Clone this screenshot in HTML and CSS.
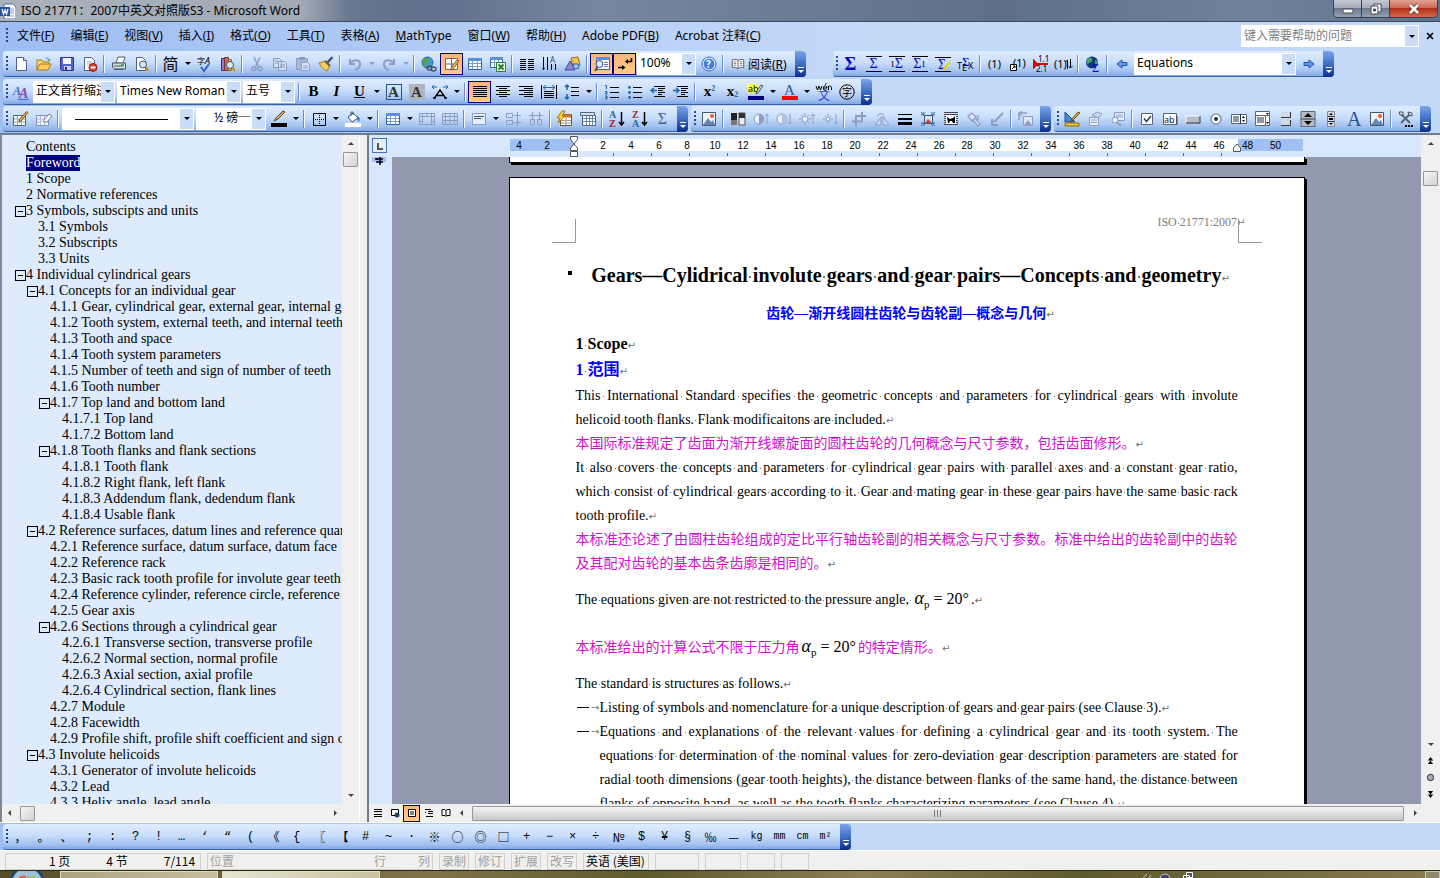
FILE: index.html
```html
<!DOCTYPE html>
<html lang="zh-CN">
<head>
    <meta charset="UTF-8">
    <meta name="viewport" content="width=device-width, initial-scale=1.0">
    <title>ISO 21771：2007中英文对照版S3 - Microsoft Word</title>
    <link rel="stylesheet" href="styles.css">
</head>
<body>
    <header class="titlebar">
        <svg class="app-icon" viewBox="0 0 16 16"><path d="M4 1h9l3 3v12H4z" fill="#fff" stroke="#4a6fb5"/><path d="M10 6h4M10 8h4M10 10h4M7 13h7" stroke="#7f9ccc"/><path d="M0 4h10v9H0z" fill="#2a55a5"/><path d="M2 6l1.500 5L5 7l1.500 4L8 6" fill="none" stroke="#fff" stroke-width="1.300"/></svg>
        <h1>ISO 21771：2007中英文对照版S3 - Microsoft Word</h1>
        <div class="window-buttons">
            <button class="win-min" aria-label="最小化"><svg viewBox="0 0 16 12"><path d="M3 6h10v4H3z" fill="#fff" stroke="#445"/></svg></button>
            <button class="win-max" aria-label="还原"><svg viewBox="0 0 16 12"><path d="M6 1h7v8H6z" fill="#fff" stroke="#445"/><path d="M3 3h7v8H3z" fill="#fff" stroke="#445"/><path d="M5.500 6h2v2h-2z" fill="#667" stroke="#445"/></svg></button>
            <button class="win-close" aria-label="关闭"><svg viewBox="0 0 16 12"><path d="M4 2l8 8M12 2l-8 8" stroke="#533" stroke-width="4"/><path d="M4 2l8 8M12 2l-8 8" stroke="#fff" stroke-width="2.500"/></svg></button>
        </div>
    </header>

    <nav class="menubar">
        <span class="grip"></span>
        <a href="#">文件(<u>F</u>)</a>
        <a href="#">编辑(<u>E</u>)</a>
        <a href="#">视图(<u>V</u>)</a>
        <a href="#">插入(<u>I</u>)</a>
        <a href="#">格式(<u>O</u>)</a>
        <a href="#">工具(<u>T</u>)</a>
        <a href="#">表格(<u>A</u>)</a>
        <a href="#"><u>M</u>athType</a>
        <a href="#">窗口(<u>W</u>)</a>
        <a href="#">帮助(<u>H</u>)</a>
        <a href="#">Adobe PDF(<u>B</u>)</a>
        <a href="#">Acrobat 注释(<u>C</u>)</a>
        <div class="combo help-box">
            <input type="text" aria-label="键入需要帮助的问题" placeholder="键入需要帮助的问题">
            <button class="combo-arrow" aria-label="展开"></button>
        </div>
        <button class="doc-close" aria-label="关闭窗口"><svg viewBox="0 0 8 8"><path d="M1 1l6 6M7 1l-6 6" stroke="#000" stroke-width="1.600"/></svg></button>
    </nav>

    <div class="toolbar-row">
        <div class="toolbar">
            <span class="grip"></span>
            <button class="tb" aria-label="新建"><svg viewBox="0 0 16 16"><path d="M3.500 1.500h7l3 3v10h-10z" fill="#fff" stroke="#4c5f85"/><path d="M10.500 1.500v3h3" fill="#dde6f6" stroke="#4c5f85"/></svg></button>
            <button class="tb" aria-label="打开"><svg viewBox="0 0 16 16"><path d="M1 14V4h5l1 2h6v3" fill="#f7d774" stroke="#a9771b"/><path d="M1 14l3-6h11l-3 6z" fill="#ffcf5a" stroke="#a9771b"/><path d="M9 3c2-2 4-1 4 1M11.500 3.500l1.500 1.500 1.500-2" fill="none" stroke="#4a6"/></svg></button>
            <button class="tb" aria-label="保存"><svg viewBox="0 0 16 16"><path d="M1.500 1.500h13v13h-12l-1-1z" fill="#5a62cf" stroke="#2d3190"/><path d="M4 2h8v6H4z" fill="#f4f6ff"/><path d="M5 10h7v4H5z" fill="#c9cdf3"/><path d="M6 11h2v3H6z" fill="#2d3190"/></svg></button>
            <button class="tb" aria-label="权限"><svg viewBox="0 0 16 16"><path d="M2.500 1.500h7l3 3v10h-10z" fill="#fff" stroke="#4c5f85"/><path d="M5 6h5M5 8h4" stroke="#9ab"/><circle cx="11" cy="11.500" r="4" fill="#d8402a" stroke="#8d1f10"/><path d="M8.500 11.500h5" stroke="#fff" stroke-width="2"/></svg></button>
            <span class="sep"></span>
            <button class="tb" aria-label="打印"><svg viewBox="0 0 16 16"><path d="M5 7l2-6h7l-2 6z" fill="#fff" stroke="#567"/><path d="M1.500 7h13v6h-11l-2-2z" fill="#d4dbe4" stroke="#456"/><path d="M3 13.500h9M3 10h9" stroke="#456"/><path d="M10 9h3" stroke="#3b3" stroke-width="2"/></svg></button>
            <button class="tb" aria-label="打印预览"><svg viewBox="0 0 16 16"><path d="M2.500 1.500h6l3 3v10h-9z" fill="#fff" stroke="#4c5f85"/><circle cx="9" cy="8.500" r="3.500" fill="#cfe6f8" stroke="#456"/><path d="M11.500 11.500l3 3" stroke="#c80" stroke-width="2"/></svg></button>
            <span class="sep"></span>
            <button class="tb glyph-cn" aria-label="简体">简</button>
            <button class="drop" aria-label="更多"></button>
            <button class="tb" aria-label="拼写"><svg viewBox="0 0 16 16"><text x="0" y="8" font-size="8" fill="#000">字</text><text x="8" y="8" font-size="9" fill="#000" font-style="italic">A</text><path d="M4 11l3 4 5-7" fill="none" stroke="#36c" stroke-width="2"/></svg></button>
            <button class="tb" aria-label="信息检索"><svg viewBox="0 0 16 16"><path d="M1.500 2.500h3v12h-3z" fill="#8a7ad0" stroke="#436"/><path d="M4.500 1.500h4v13h-4z" fill="#c46a5a" stroke="#733"/><path d="M8.500 3.500h3v11h-3z" fill="#f0c860" stroke="#863"/><circle cx="10" cy="9" r="3.500" fill="#d8ecfa" stroke="#456"/><path d="M12.500 12l2.500 3" stroke="#c80" stroke-width="2"/></svg></button>
            <span class="sep"></span>
            <button class="tb off" aria-label="剪切"><svg viewBox="0 0 16 16"><path d="M5 1l4 9M11 1L7 10" stroke="#8b9dc3" stroke-width="1.500"/><circle cx="5" cy="12.500" r="2" fill="none" stroke="#8b9dc3" stroke-width="1.500"/><circle cx="11" cy="12.500" r="2" fill="none" stroke="#8b9dc3" stroke-width="1.500"/></svg></button>
            <button class="tb off" aria-label="复制"><svg viewBox="0 0 16 16"><path d="M1.500 2.500h6l2 2v7h-8zM6.500 5.500h6l2 2v7h-8z" fill="#d5e0f5" stroke="#8b9dc3"/><path d="M8 9h5M8 11h5M3 5h3M3 7h3" stroke="#8b9dc3"/></svg></button>
            <button class="tb off" aria-label="粘贴"><svg viewBox="0 0 16 16"><path d="M1.500 2.500h11v11h-11z" fill="#a9b9dc" stroke="#8b9dc3"/><path d="M4 1h6v3H4z" fill="#8b9dc3"/><path d="M6.500 6.500h6l2 2v6h-8z" fill="#dce6f8" stroke="#8b9dc3"/><path d="M8 10h5M8 12h5" stroke="#8b9dc3"/></svg></button>
            <button class="tb" aria-label="格式刷"><svg viewBox="0 0 16 16"><path d="M14.500 1L9 7" stroke="#456" stroke-width="2.500"/><path d="M1 7l7-2 4 4-3 6c-3-1-6-4-8-8z" fill="#f3cf57" stroke="#a07818"/><path d="M7 5l5 5" stroke="#754" stroke-width="2"/></svg></button>
            <span class="sep"></span>
            <button class="tb off" aria-label="撤消"><svg viewBox="0 0 16 16"><path d="M3 3v5h5M3 8c3-5 10-5 10 0 0 3-2 5-5 6" fill="none" stroke="#8b9dc3" stroke-width="2"/></svg></button>
            <button class="drop off" aria-label="撤消列表"></button>
            <button class="tb off" aria-label="恢复"><svg viewBox="0 0 16 16"><path d="M13 3v5H8M13 8C10 3 3 3 3 8c0 3 2 5 5 6" fill="none" stroke="#8b9dc3" stroke-width="2"/></svg></button>
            <button class="drop off" aria-label="恢复列表"></button>
            <span class="sep"></span>
            <button class="tb" aria-label="超链接"><svg viewBox="0 0 16 16"><circle cx="6.500" cy="6.500" r="5.500" fill="#4a9ad8" stroke="#2a5f8e"/><path d="M3 3c3-2 5-1 5 1s-3 2-3 4 1 3-1 3-3-5-1-8z" fill="#49a947"/><path d="M6 12a2.500 2 0 0 1 5 0 2.500 2 0 0 1-5 0zm4 1a2.500 2 0 0 1 5 0 2.500 2 0 0 1-5 0z" fill="none" stroke="#456" stroke-width="1.300"/></svg></button>
            <button class="tb on" aria-label="表格和边框"><svg viewBox="0 0 16 16"><path d="M1.500 2.500h12v11h-12z" fill="#fff" stroke="#667"/><path d="M7.500 3v10M2 8h11" stroke="#667"/><path d="M15 5l-6 8-2 1 0-2 6-8z" fill="#f2c14e" stroke="#85580e"/></svg></button>
            <button class="tb" aria-label="插入表格"><svg viewBox="0 0 16 16"><path d="M1.500 2.500h13v11h-13z" fill="#fff" stroke="#2f5fb3"/><path d="M1 3.500h14" stroke="#5a8fe0" stroke-width="3"/><path d="M2 7.500h12M2 10.500h12M5.500 5v8M10.500 5v8" stroke="#7b9dd6"/></svg></button>
            <button class="tb" aria-label="插入 Excel 表格"><svg viewBox="0 0 16 16"><path d="M.5 1.500h12v10H.5z" fill="#fff" stroke="#2f5fb3"/><path d="M0 2.500h13" stroke="#5a8fe0" stroke-width="3"/><path d="M1 6.500h11M4.500 4v7M8.500 4v7" stroke="#7b9dd6"/><path d="M6.500 6.500h9v9h-9z" fill="#e8f5e4" stroke="#2d8132"/><path d="M8.500 8.500l5 5M13.500 8.500l-5 5" stroke="#2d8132" stroke-width="2"/></svg></button>
            <span class="sep"></span>
            <button class="tb" aria-label="分栏"><svg viewBox="0 0 16 16"><path d="M1 3.500h6M9 3.500h6M1 5.500h6M9 5.500h6M1 7.500h6M9 7.500h6M1 9.500h6M9 9.500h6M1 11.500h6M9 11.500h6M1 13.500h6M9 13.500h6" stroke="#000"/></svg></button>
            <button class="tb" aria-label="文字方向"><svg viewBox="0 0 16 16"><path d="M1.500 1v13M5.500 1v13M9.500 8v6M13.500 8v6" stroke="#000"/><text x="8" y="7" font-size="8" fill="#248">A</text><path d="M0 12h3l-1.500 2z" fill="#000"/></svg></button>
            <button class="tb" aria-label="绘图"><svg viewBox="0 0 16 16"><path d="M6 2l7-1 2 8-7 2z" fill="#f0c254" stroke="#94701f"/><path d="M5 5l5 9H0z" fill="#8f87d8" stroke="#4b4598"/><path d="M8 8h5l1 4-5 1z" fill="#9bc7f0" stroke="#36609c"/></svg></button>
            <span class="sep"></span>
            <button class="tb on" aria-label="文档结构图"><svg viewBox="0 0 16 16"><path d="M2.500 1.500h13v12h-13z" fill="#fff" stroke="#2f5fb3"/><path d="M2 2.500h14" stroke="#5a8fe0" stroke-width="3"/><path d="M10 6.500h4M10 8.500h4M10 10.500h4" stroke="#678"/><circle cx="5.500" cy="8" r="3.500" fill="#d8ecfa" stroke="#456"/><path d="M3.500 11L1 15" stroke="#456" stroke-width="2"/></svg></button>
            <button class="tb on" aria-label="显示编辑标记"><svg viewBox="0 0 16 16"><path d="M14.500 2v3.500H10" fill="none" stroke="#000" stroke-width="1.500"/><path d="M11 3v5L8 5.500z" fill="#000"/><path d="M1 11.500h4" stroke="#000" stroke-width="1.500"/><path d="M5 9v5l3.500-2.500z" fill="#000"/></svg></button>
            <div class="combo zoom-box">
                <select aria-label="显示比例"><option>100%</option></select>
                <span class="combo-arrow"></span>
            </div>
            <button class="tb" aria-label="帮助"><svg viewBox="0 0 16 16"><circle cx="8" cy="8" r="7" fill="#fff" stroke="#2b62c4"/><circle cx="8" cy="8" r="5.500" fill="#3d7ee0"/><text x="5" y="12" font-size="10" font-weight="bold" fill="#fff">?</text></svg></button>
            <span class="sep"></span>
            <button class="read"><svg viewBox="0 0 16 16"><path d="M8 4c-2-2-5-1-6.500-1v9c3-.5 5 0 6.500 1.500 1.500-1.500 3.500-2 6.500-1.500V3C13 3 10 2 8 4zM8 4v9" fill="#fff" stroke="#555"/><path d="M3 5.500h3M3 7.500h3M3 9.500h3M10 5.500h3M10 7.500h3M10 9.500h3" stroke="#777"/></svg><span>阅读(<u>R</u>)</span></button>
            <button class="more" aria-label="工具栏选项"></button>
        </div>

        <div class="toolbar math-bar">
            <span class="grip"></span>
            <button class="tb sigma big" aria-label="公式">Σ</button>
            <button class="tb sigma lined" aria-label="显示公式">Σ</button>
            <button class="tb sigma lined" aria-label="左编号"><small>1</small>Σ</button>
            <button class="tb sigma lined" aria-label="右编号">Σ<small>1</small></button>
            <button class="tb" aria-label="编辑公式"><svg viewBox="0 0 16 16"><path d="M0 1.500h16M0 15.500h16" stroke="#000"/><text class="sig" x="3" y="13" font-size="14">Σ</text><path d="M15 6l-7 8" stroke="#e8d800" stroke-width="2"/></svg></button>
            <button class="tb" aria-label="TeX"><svg viewBox="0 0 16 16"><text class="sig" x="4" y="10" font-size="13">Σ</text><text x="-1" y="13" font-size="9" fill="#000">T</text><text x="4" y="15" font-size="9" fill="#000">E</text><text x="10" y="13" font-size="9" fill="#000">X</text></svg></button>
            <span class="sep"></span>
            <button class="tb mono" aria-label="编号">(1)</button>
            <button class="tb" aria-label="引用"><svg viewBox="0 0 16 16"><text x="3" y="11" font-size="11" fill="#000">(1)</text><path d="M.5 8.500h6v6h-6z" fill="#fff" stroke="#000"/><path d="M2 13l3-3M3 10h2v2" stroke="#000" fill="none"/></svg></button>
            <button class="tb" aria-label="格式编号"><svg viewBox="0 0 16 16"><text x="5" y="6" font-size="8" fill="#000">1.1</text><text x="3" y="16" font-size="8" fill="#000">2.1</text><path d="M1 5v6l3-3zM1 8h14" fill="#d00" stroke="#d00" stroke-width="2"/></svg></button>
            <button class="tb" aria-label="更新编号"><svg viewBox="0 0 16 16"><text x="-2" y="12" font-size="11" fill="#000">(1)</text><path d="M11.500 13V4l-2 2M14.500 3v9l2-2M14.500 12l-2-2" stroke="#000" fill="none"/></svg></button>
            <span class="sep"></span>
            <button class="tb" aria-label="网页"><svg viewBox="0 0 16 16"><circle cx="7" cy="6.500" r="6" fill="#123a78"/><path d="M3 2c4-1 5 1 4 3s-4 1-4 4c-2-2-2-5 0-7zm7 2l3 1-1 4-2-1z" fill="#3fa86a"/><text class="sig" x="7" y="16" font-size="12">Σ</text></svg></button>
            <span class="sep"></span>
            <button class="tb" aria-label="上一个"><svg viewBox="0 0 16 16"><path d="M3 8l5-4v2.500h5v3H8V12z" fill="#5c9cf0" stroke="#23509c"/></svg></button>
            <div class="combo equations-box">
                <select aria-label="浏览对象"><option>Equations</option></select>
                <span class="combo-arrow"></span>
            </div>
            <button class="tb" aria-label="下一个"><svg viewBox="0 0 16 16"><path d="M13 8L8 4v2.500H3v3h5V12z" fill="#5c9cf0" stroke="#23509c"/></svg></button>
            <button class="more" aria-label="工具栏选项"></button>
        </div>
    </div>

    <div class="toolbar-row">
        <div class="toolbar">
            <span class="grip"></span>
            <button class="tb" aria-label="格式窗格"><svg viewBox="0 0 16 16"><text class="serif" x="0" y="11" font-size="12" font-style="italic" font-weight="bold" fill="#4a5fc8">A</text><text class="serif" x="6" y="14" font-size="14" font-style="italic" font-weight="bold" fill="#8a4ab0">A</text><path d="M5 15.500h11" stroke="#36c"/></svg></button>
            <div class="combo style-box">
                <select aria-label="样式"><option>正文首行缩进</option></select>
                <span class="combo-arrow"></span>
            </div>
            <div class="combo font-box">
                <select aria-label="字体"><option>Times New Roman</option></select>
                <span class="combo-arrow"></span>
            </div>
            <div class="combo size-box">
                <select aria-label="字号"><option>五号</option></select>
                <span class="combo-arrow"></span>
            </div>
            <span class="sep"></span>
            <button class="tb letter"><b>B</b></button>
            <button class="tb letter"><i>I</i></button>
            <button class="tb letter"><u>U</u></button>
            <button class="drop" aria-label="下划线"></button>
            <button class="tb letter boxed" aria-label="字符边框"><span>A</span></button>
            <button class="tb letter shaded" aria-label="字符底纹"><span>A</span></button>
            <button class="tb" aria-label="字符缩放"><svg viewBox="0 0 16 16"><path d="M1 14h3M12 14h3M2.500 14L8 6l5.500 8M5 11.500h6" fill="none" stroke="#000" stroke-width="1.500"/><path d="M0 3h5M2 1L0 3l2 2M16 3h-5M14 1l2 2-2 2" fill="none" stroke="#26a"/></svg></button>
            <button class="drop" aria-label="缩放比例"></button>
            <span class="sep"></span>
            <button class="tb on" aria-label="两端对齐"><svg viewBox="0 0 16 16"><path d="M1 2.500h14M1 4.500h14M1 6.500h14M1 8.500h14M1 10.500h14M1 12.500h14" stroke="#000"/></svg></button>
            <button class="tb" aria-label="居中"><svg viewBox="0 0 16 16"><path d="M1 2.500h14M4 4.500h8M1 6.500h14M4 8.500h8M1 10.500h14M4 12.500h8" stroke="#000"/></svg></button>
            <button class="tb" aria-label="右对齐"><svg viewBox="0 0 16 16"><path d="M1 2.500h14M6 4.500h9M1 6.500h14M6 8.500h9M1 10.500h14M6 12.500h9" stroke="#000"/></svg></button>
            <button class="tb" aria-label="分散对齐"><svg viewBox="0 0 16 16"><path d="M.5 1v14M15.500 1v14M3 7.500h10M3 9.500h10M3 11.500h10M3 13.500h10" stroke="#000"/><path d="M2 3.500h12M5 1L2 3.500 5 6M11 1l3 2.500L11 6" fill="none" stroke="#26a"/></svg></button>
            <button class="tb" aria-label="行距"><svg viewBox="0 0 16 16"><path d="M7 3.500h8M7 7.500h8M7 11.500h8" stroke="#000"/><path d="M3 1v5M3 10v5M1 3l2-2 2 2M1 13l2 2 2-2" fill="none" stroke="#26a" stroke-width="1.500"/></svg></button>
            <button class="drop" aria-label="行距选项"></button>
            <span class="sep"></span>
            <button class="tb" aria-label="编号"><svg viewBox="0 0 16 16"><path d="M6 3.500h9M6 8.500h9M6 13.500h9" stroke="#000"/><path d="M1 1.500h1.500V5M1 7.500h2v1.500H1.500v1h2M1 12h2v3H1M1.500 13.500H3" fill="none" stroke="#26a"/></svg></button>
            <button class="tb" aria-label="项目符号"><svg viewBox="0 0 16 16"><path d="M6 3.500h9M6 8.500h9M6 13.500h9" stroke="#000"/><circle cx="2.500" cy="3.500" r="1.400" fill="#26a"/><circle cx="2.500" cy="8.500" r="1.400" fill="#26a"/><circle cx="2.500" cy="13.500" r="1.400" fill="#26a"/></svg></button>
            <button class="tb" aria-label="减少缩进量"><svg viewBox="0 0 16 16"><path d="M4 2.500h11M8 4.500h7M8 6.500h5M8 8.500h7M8 10.500h4M4 12.500h11" stroke="#000"/><path d="M7 6.500H1M4 4L1 6.500 4 9" fill="none" stroke="#26a" stroke-width="1.500"/></svg></button>
            <button class="tb" aria-label="增加缩进量"><svg viewBox="0 0 16 16"><path d="M4 2.500h11M8 4.500h7M8 6.500h5M8 8.500h7M8 10.500h4M4 12.500h11" stroke="#000"/><path d="M0 6.500h6M3 4l3 2.500L3 9" fill="none" stroke="#26a" stroke-width="1.500"/></svg></button>
            <span class="sep"></span>
            <button class="tb letter" aria-label="上标">x<sup>2</sup></button>
            <button class="tb letter" aria-label="下标">x<sub>2</sub></button>
            <button class="tb" aria-label="突出显示"><svg viewBox="0 0 16 16"><path d="M0 0h9v9H0z" fill="#ff3"/><text x="0" y="8" font-size="9" fill="#000">ab</text><path d="M15 2l-5 7-2 1 1-3 4-6z" fill="#cde" stroke="#456"/><path d="M0 12h16v4H0z" fill="#000080"/></svg></button>
            <button class="drop" aria-label="突出显示颜色"></button>
            <button class="tb" aria-label="字体颜色"><svg viewBox="0 0 16 16"><text class="serif" x="2" y="11" font-size="15" fill="#2c4f9e">A</text><path d="M0 12h16v4H0z" fill="#f00"/></svg></button>
            <button class="drop" aria-label="字体颜色选项"></button>
            <button class="tb" aria-label="拼音指南"><svg viewBox="0 0 16 16"><path d="M0 2l1.500 4L3 2l1.500 4L6 2M7.500 4h3.500c0-3-3.500-3-3.500 0s3 2.500 3.500 1.500M9 .5l1.500-1M12.500 6V2M12.500 3c1-1.500 3-1 3 .5V6" fill="none" stroke="#000"/><text x="2" y="16" font-size="12" fill="#34c">文</text></svg></button>
            <button class="tb" aria-label="带圈字符"><svg viewBox="0 0 16 16"><circle cx="8" cy="8" r="7.200" fill="none" stroke="#000"/><text x="3" y="12" font-size="10" fill="#000">字</text></svg></button>
            <button class="more" aria-label="工具栏选项"></button>
        </div>
    </div>

    <div class="toolbar-row tight">
        <div class="toolbar">
            <span class="grip"></span>
            <button class="tb" aria-label="绘制表格"><svg viewBox="0 0 16 16"><path d="M.5 4.500h12v10H.5z" fill="#fff" stroke="#567"/><path d="M1 8h11M1 11h11M4.500 5v9M8.500 5v9" stroke="#9ab"/><path d="M15 1.500L8 10l-2 1 .5-2.500 7-8z" fill="#f2c14e" stroke="#6b4c14"/></svg></button>
            <button class="tb" aria-label="擦除"><svg viewBox="0 0 16 16"><path d="M.5 4.500h12v10H.5z" fill="#eef3fc" stroke="#8090b0"/><path d="M1 8h11M1 11h11M4.500 5v9M8.500 5v9" stroke="#b4c2dc"/><path d="M8 9l5-6 3 2-5 6H8z" fill="#fff" stroke="#7080a0"/></svg></button>
            <span class="sep"></span>
            <div class="combo line-box">
                <select aria-label="线型"><option></option></select>
                <span class="line-sample"></span>
                <span class="combo-arrow"></span>
            </div>
            <div class="combo weight-box">
                <select aria-label="粗细"><option>½ 磅─</option></select>
                <span class="combo-arrow"></span>
            </div>
            <button class="tb" aria-label="边框颜色"><svg viewBox="0 0 16 16"><path d="M14 1L7 8l-4 2 2-3 7-7z" fill="#e0b060" stroke="#5c4420"/><path d="M0 12h16v4H0z" fill="#000"/></svg></button>
            <button class="drop" aria-label="颜色选项"></button>
            <span class="sep"></span>
            <button class="tb" aria-label="外侧框线"><svg viewBox="0 0 16 16"><path d="M2.500 2.500h12v12h-12z" fill="none" stroke="#000"/><path d="M8.500 4v9M4 8.500h9" stroke="#000" stroke-dasharray="1 1"/></svg></button>
            <button class="drop" aria-label="框线选项"></button>
            <button class="tb" aria-label="底纹颜色"><svg viewBox="0 0 16 16"><path d="M3 6l5-4 5 5-6 4z" fill="#fff" stroke="#456"/><path d="M6 5V1h2v3" fill="none" stroke="#456"/><path d="M12 5c3 1 3 3 2 6l-2-3z" fill="#3a70c8"/><path d="M0 12h16v4H0z" fill="#fff"/></svg></button>
            <button class="drop" aria-label="底纹选项"></button>
            <span class="sep"></span>
            <button class="tb" aria-label="插入表格"><svg viewBox="0 0 16 16"><path d="M1.500 2.500h13v11h-13z" fill="#fff" stroke="#2f5fb3"/><path d="M1 3.500h14" stroke="#5a8fe0" stroke-width="3"/><path d="M2 7.500h12M2 10.500h12M5.500 5v8M10.500 5v8" stroke="#7b9dd6"/></svg></button>
            <button class="drop" aria-label="插入选项"></button>
            <button class="tb off" aria-label="合并单元格"><svg viewBox="0 0 16 16"><path d="M.5 2.500h15v11H.5zM0 5.500h16M3.500 3v10M8 3v2M12.500 3v10M0 10.500h3M13 10.500h3" fill="none" stroke="#8b9dc3"/></svg></button>
            <button class="tb off" aria-label="拆分单元格"><svg viewBox="0 0 16 16"><path d="M.5 2.500h15v11H.5zM0 5.500h16M3.500 3v10M8 3v10M12.500 3v10M0 9.500h16" fill="none" stroke="#8b9dc3"/></svg></button>
            <span class="sep"></span>
            <button class="tb off" aria-label="对齐方式"><svg viewBox="0 0 16 16"><path d="M1.500 2.500h13v11h-13z" fill="#e6eefb" stroke="#8b9dc3"/><path d="M3 5.500h10M3 7.500h7" stroke="#456"/></svg></button>
            <button class="drop" aria-label="对齐选项"></button>
            <button class="tb off" aria-label="平均分布各行"><svg viewBox="0 0 16 16"><path d="M1.500 2.500h6v4h-6zM1.500 9.500h6v4h-6zM12.500 1v14M9 4.500h7M9 11.500h7" fill="none" stroke="#8b9dc3"/></svg></button>
            <button class="tb off" aria-label="平均分布各列"><svg viewBox="0 0 16 16"><path d="M2.500 8.500h4v5h-4zM9.500 8.500h4v5h-4zM1 4.500h14M4.500 1v7M11.500 1v7" fill="none" stroke="#8b9dc3"/></svg></button>
            <span class="sep"></span>
            <button class="tb" aria-label="自动套用格式"><svg viewBox="0 0 16 16"><path d="M3.500 3.500h11v11h-11z" fill="#fff" stroke="#654"/><path d="M4 5h10" stroke="#e0742a" stroke-width="3"/><path d="M4 9.500h10M4 12h10M9 7v7" stroke="#a98"/><path d="M5 0L0 7h3l-2 5 7-7H5l3-5z" fill="#ffd83a" stroke="#a9770b"/></svg></button>
            <button class="tb" aria-label="隐藏虚框"><svg viewBox="0 0 16 16"><path d="M.5 1.500h14v3H.5z" fill="#cfe0fa" stroke="#567"/><path d="M2.500 4.500h13v10h-13z" fill="#fff" stroke="#567"/><path d="M3 7.500h12M3 10.500h12M6.500 5v9M9.500 5v9M12.500 5v9" stroke="#689"/></svg></button>
            <span class="sep"></span>
            <button class="tb" aria-label="升序"><svg viewBox="0 0 16 16"><text class="serif" x="0" y="7" font-size="10" font-weight="bold" fill="#26a">A</text><text class="serif" x="0" y="16" font-size="10" font-weight="bold" fill="#a22">Z</text><path d="M12.500 1v12M10 11l2.500 3 2.500-3" fill="none" stroke="#000" stroke-width="1.500"/></svg></button>
            <button class="tb" aria-label="降序"><svg viewBox="0 0 16 16"><text class="serif" x="0" y="7" font-size="10" font-weight="bold" fill="#a22">Z</text><text class="serif" x="0" y="16" font-size="10" font-weight="bold" fill="#26a">A</text><path d="M12.500 1v12M10 11l2.500 3 2.500-3" fill="none" stroke="#000" stroke-width="1.500"/></svg></button>
            <button class="tb sigma dim" aria-label="自动求和">Σ</button>
            <button class="more" aria-label="工具栏选项"></button>
        </div>

        <div class="toolbar">
            <span class="grip"></span>
            <button class="tb" aria-label="插入图片"><svg viewBox="0 0 16 16"><path d="M1.500 1.500h13v13h-13z" fill="#eaf3fe" stroke="#456"/><path d="M2 14l5-7 3 4 2-2 2 5z" fill="#6486b8"/><circle cx="11" cy="5" r="2" fill="#e8622c"/></svg></button>
            <span class="sep"></span>
            <button class="tb" aria-label="颜色"><svg viewBox="0 0 16 16"><path d="M1 2h6v12H1z" fill="#222"/><path d="M1 9h6v5H1z" fill="#777"/><path d="M9 2h6v12H9z" fill="#eee" stroke="#555"/><path d="M9 2h6v5H9z" fill="#333"/></svg></button>
            <button class="tb off" aria-label="增加对比度"><svg viewBox="0 0 16 16"><circle cx="6" cy="8" r="5" fill="#eef" stroke="#8b9dc3"/><path d="M6 3a5 5 0 0 1 0 10z" fill="#8b9dc3"/><path d="M14 13V3M12 5l2-2 2 2" fill="none" stroke="#8b9dc3"/></svg></button>
            <button class="tb off" aria-label="降低对比度"><svg viewBox="0 0 16 16"><circle cx="6" cy="8" r="5" fill="#eef" stroke="#8b9dc3"/><path d="M6 3a5 5 0 0 1 0 10z" fill="#b4c2dc"/><path d="M14 3v10M12 11l2 2 2-2" fill="none" stroke="#8b9dc3"/></svg></button>
            <button class="tb off" aria-label="增加亮度"><svg viewBox="0 0 16 16"><circle cx="6" cy="8" r="3" fill="#eef" stroke="#8b9dc3"/><path d="M6 2v2M6 12v2M0 8h2M10 8h2M2 4l1 1M9 11l1 1M2 12l1-1M9 5l1-1M14 13V3M12 5l2-2 2 2" fill="none" stroke="#8b9dc3"/></svg></button>
            <button class="tb off" aria-label="降低亮度"><svg viewBox="0 0 16 16"><circle cx="6" cy="8" r="2" fill="#eef" stroke="#8b9dc3"/><path d="M6 3v2M6 11v2M1 8h2M9 8h2M3 5l1 1M8 10l1 1M3 11l1-1M8 6l1-1M14 3v10M12 11l2 2 2-2" fill="none" stroke="#8b9dc3"/></svg></button>
            <span class="sep"></span>
            <button class="tb off" aria-label="裁剪"><svg viewBox="0 0 16 16"><path d="M5 15V5h10M1 10.500h10V1M1 10.500h4" fill="none" stroke="#8b9dc3" stroke-width="2"/></svg></button>
            <button class="tb off" aria-label="旋转"><svg viewBox="0 0 16 16"><path d="M1 14h6V6zM9 14h6L9 5z" fill="#c8d6f0" stroke="#8b9dc3"/><path d="M3 6c1-4 5-4 7-2" fill="none" stroke="#8b9dc3"/></svg></button>
            <button class="tb" aria-label="线型"><svg viewBox="0 0 16 16"><path d="M1 3.500h14" stroke="#000"/><path d="M1 8h14" stroke="#000" stroke-width="2"/><path d="M1 12.500h14" stroke="#000" stroke-width="3"/></svg></button>
            <button class="tb" aria-label="压缩图片"><svg viewBox="0 0 16 16"><path d="M4.500 4.500h8v8h-8z" fill="#cfe3fb" stroke="#456"/><path d="M5 12l3-4 4 4z" fill="#c43"/><path d="M1 1l3 3M15 1l-3 3M1 15l3-3M15 15l-3-3M4 1v3H1M12 1v3h3M4 15v-3H1M12 15v-3h3" fill="none" stroke="#26a"/></svg></button>
            <button class="tb" aria-label="文字环绕"><svg viewBox="0 0 16 16"><path d="M1 1.500h14M1 3.500h14M1 5.500h14M1 7.500h14M1 9.500h14M1 11.500h14M1 13.500h14" stroke="#445"/><path d="M3 4h10v9H3z" fill="#fff"/><path d="M4 6l3 2 3-1 2-2v7h-2l-1-2H7l-1 2H5z" fill="#000"/></svg></button>
            <button class="tb off" aria-label="设置格式"><svg viewBox="0 0 16 16"><path d="M2 5l4-3 4 4-4 4zM9 7l5 6-2 2-5-6M12 4v5" fill="#dde7f8" stroke="#8b9dc3" stroke-width="1.300"/></svg></button>
            <button class="tb off" aria-label="设置透明色"><svg viewBox="0 0 16 16"><path d="M14 2L5 11M3 8v6h6" fill="none" stroke="#8b9dc3" stroke-width="2"/></svg></button>
            <span class="sep"></span>
            <button class="tb off" aria-label="重设图片"><svg viewBox="0 0 16 16"><path d="M5.500 5.500h9v9h-9z" fill="#dde7f8" stroke="#8b9dc3"/><path d="M6 14l4-5 4 5z" fill="#8b9dc3"/><path d="M1 9V2h8M4 0L1 3l3 2" fill="none" stroke="#8b9dc3" stroke-width="1.500"/></svg></button>
            <button class="more" aria-label="工具栏选项"></button>
        </div>

        <div class="toolbar">
            <span class="grip"></span>
            <button class="tb" aria-label="设计模式"><svg viewBox="0 0 16 16"><path d="M1 1v10h10z" fill="#4a86dc" stroke="#1d4c94"/><path d="M1 12h14v3H1z" fill="#f2c53a" stroke="#8a6914"/><path d="M14 1L8 8l-2 3 3-2 7-7z" fill="#f0b040" stroke="#6b4c14"/></svg></button>
            <button class="tb off" aria-label="属性"><svg viewBox="0 0 16 16"><path d="M2.500 6.500h9v8h-9z" fill="#e6eefb" stroke="#8b9dc3"/><path d="M4 9h6M4 11.500h6" stroke="#8b9dc3"/><path d="M5 4l5-3 5 2-4 4z" fill="#c8d6f0" stroke="#8b9dc3"/></svg></button>
            <button class="tb off" aria-label="查看代码"><svg viewBox="0 0 16 16"><path d="M4.500 1.500h10v8h-10z" fill="#e6eefb" stroke="#8b9dc3"/><path d="M6 4h7M6 6h7" stroke="#8b9dc3"/><circle cx="5" cy="9" r="3" fill="#e6eefb" stroke="#8b9dc3"/><path d="M7 11l4 4" stroke="#8b9dc3" stroke-width="2"/></svg></button>
            <span class="sep"></span>
            <button class="tb" aria-label="复选框"><svg viewBox="0 0 16 16"><path d="M2.500 2.500h11v11h-11z" fill="#fff" stroke="#567"/><path d="M5 7.500l2.500 3L12 5" fill="none" stroke="#345" stroke-width="1.500"/></svg></button>
            <button class="tb" aria-label="文本框"><svg viewBox="0 0 16 16"><path d="M1.500 2.500h13v11h-13z" fill="#fff" stroke="#567"/><text x="2" y="12" font-size="9" fill="#124">ab|</text></svg></button>
            <button class="tb" aria-label="命令按钮"><svg viewBox="0 0 16 16"><path d="M1 5h14v7H1z" fill="#b8bcc4"/><path d="M1 12V5h14" fill="none" stroke="#fff"/><path d="M1 12h14V5" fill="none" stroke="#334"/></svg></button>
            <button class="tb" aria-label="选项按钮"><svg viewBox="0 0 16 16"><circle cx="8" cy="8" r="5" fill="#fff" stroke="#8a93a8" stroke-width="1.500"/><circle cx="8" cy="8" r="2" fill="#234"/></svg></button>
            <button class="tb" aria-label="列表框"><svg viewBox="0 0 16 16"><path d="M.5 3.500h15v9H.5z" fill="#fff" stroke="#567"/><path d="M2 6h6M2 8h6M2 10h6M9.500 3v10" stroke="#234"/><path d="M11 7h3l-1.500-2zM11 9h3l-1.500 2z" fill="#000"/></svg></button>
            <button class="tb" aria-label="组合框"><svg viewBox="0 0 16 16"><path d="M1.500.5h14v4h-14zM1.500 4.500h10v10h-10zM11.500 4.500h4v10h-4z" fill="#fff" stroke="#567"/><path d="M3 7h7M3 9h7M3 11h7" stroke="#234"/><path d="M12 2h3l-1.500 2zM12 11h3l-1.500 2z" fill="#000"/></svg></button>
            <button class="tb" aria-label="切换按钮"><svg viewBox="0 0 16 16"><path d="M4 1h9v5H4zM4 9h9v5H4z" fill="#d4d8e0"/><path d="M4 6.500h9.500V1M4 14.500h9.500V9" fill="none" stroke="#333"/></svg></button>
            <button class="tb" aria-label="数值调节钮"><svg viewBox="0 0 16 16"><path d="M1 .5h14v15H1z" fill="#b8bcc4" stroke="#567"/><path d="M1 8h14" stroke="#334"/><path d="M4 6h8L8 2zM4 10h8l-4 4z" fill="#000"/></svg></button>
            <button class="tb" aria-label="滚动条"><svg viewBox="0 0 16 16"><path d="M4.500 .5h7v15h-7z" fill="#d4d8e0" stroke="#889"/><path d="M5 5.500h6M5 10.500h6" stroke="#334"/><path d="M6 4h4L8 2zM6 12h4l-2 2zM6 7h4v2H6z" fill="#000"/></svg></button>
            <button class="tb" aria-label="标签"><svg viewBox="0 0 16 16"><text class="serif" x="1" y="15" font-size="20" fill="#24509c">A</text></svg></button>
            <button class="tb" aria-label="图像"><svg viewBox="0 0 16 16"><path d="M1.500 1.500h13v13h-13z" fill="#eaf3fe" stroke="#456"/><path d="M2 14l5-7 3 4 2-2 2 5z" fill="#6486b8"/><circle cx="11" cy="5" r="2" fill="#e8622c"/></svg></button>
            <span class="sep"></span>
            <button class="tb" aria-label="其他控件"><svg viewBox="0 0 16 16"><path d="M3 3l9 9M12 3l-9 9" stroke="#567" stroke-width="2"/><path d="M1 1h4v3H2zM10 1l4 1v3l-3-1z" fill="#dde" stroke="#456"/><path d="M10 14h2v2h-2zM13 14h2v2h-2zM7 14h2v2H7z" fill="#000"/></svg></button>
            <button class="more" aria-label="工具栏选项"></button>
        </div>
    </div>

    <main class="workspace">
        <aside class="outline">
            <div class="outline-top">
                <ul class="tree">
                    <li><a href="#">Contents</a></li>
                    <li><a href="#" class="current">Foreword</a></li>
                    <li><a href="#">1 Scope</a></li>
                    <li><a href="#">2 Normative references</a></li>
                    <li class="open"><a href="#">3 Symbols, subscipts and units</a></li>
                    <li class="l2"><a href="#">3.1 Symbols</a></li>
                    <li class="l2"><a href="#">3.2 Subscripts</a></li>
                    <li class="l2"><a href="#">3.3 Units</a></li>
                    <li class="open"><a href="#">4 Individual cylindrical gears</a></li>
                    <li class="l2 open"><a href="#">4.1 Concepts for an individual gear</a></li>
                    <li class="l3"><a href="#">4.1.1 Gear, cylindrical gear, external gear, internal gear</a></li>
                    <li class="l3"><a href="#">4.1.2 Tooth system, external teeth, and internal teeth</a></li>
                    <li class="l3"><a href="#">4.1.3 Tooth and space</a></li>
                    <li class="l3"><a href="#">4.1.4 Tooth system parameters</a></li>
                    <li class="l3"><a href="#">4.1.5 Number of teeth and sign of number of teeth</a></li>
                    <li class="l3"><a href="#">4.1.6 Tooth number</a></li>
                    <li class="l3 open"><a href="#">4.1.7 Top land and bottom land</a></li>
                    <li class="l4"><a href="#">4.1.7.1 Top land</a></li>
                    <li class="l4"><a href="#">4.1.7.2 Bottom land</a></li>
                    <li class="l3 open"><a href="#">4.1.8 Tooth flanks and flank sections</a></li>
                    <li class="l4"><a href="#">4.1.8.1 Tooth flank</a></li>
                    <li class="l4"><a href="#">4.1.8.2 Right flank, left flank</a></li>
                    <li class="l4"><a href="#">4.1.8.3 Addendum flank, dedendum flank</a></li>
                    <li class="l4"><a href="#">4.1.8.4 Usable flank</a></li>
                    <li class="l2 open"><a href="#">4.2 Reference surfaces, datum lines and reference quantities</a></li>
                    <li class="l3"><a href="#">4.2.1 Reference surface, datum surface, datum face</a></li>
                    <li class="l3"><a href="#">4.2.2 Reference rack</a></li>
                    <li class="l3"><a href="#">4.2.3 Basic rack tooth profile for involute gear teeth</a></li>
                    <li class="l3"><a href="#">4.2.4 Reference cylinder, reference circle, reference</a></li>
                    <li class="l3"><a href="#">4.2.5 Gear axis</a></li>
                    <li class="l3 open"><a href="#">4.2.6 Sections through a cylindrical gear</a></li>
                    <li class="l4"><a href="#">4.2.6.1 Transverse section, transverse profile</a></li>
                    <li class="l4"><a href="#">4.2.6.2 Normal section, normal profile</a></li>
                    <li class="l4"><a href="#">4.2.6.3 Axial section, axial profile</a></li>
                    <li class="l4"><a href="#">4.2.6.4 Cylindrical section, flank lines</a></li>
                    <li class="l3"><a href="#">4.2.7 Module</a></li>
                    <li class="l3"><a href="#">4.2.8 Facewidth</a></li>
                    <li class="l3"><a href="#">4.2.9 Profile shift, profile shift coefficient and sign of</a></li>
                    <li class="l2 open"><a href="#">4.3 Involute helicoids</a></li>
                    <li class="l3"><a href="#">4.3.1 Generator of involute helicoids</a></li>
                    <li class="l3"><a href="#">4.3.2 Lead</a></li>
                    <li class="l3"><a href="#">4.3.3 Helix angle, lead angle</a></li>
                </ul>
                <div class="vscroll">
                    <span class="tri up"></span>
                    <span class="thumb"></span>
                    <span class="tri down last"></span>
                </div>
            </div>
            <div class="hscroll">
                <span class="tri left"></span>
                <span class="thumb"></span>
                <span class="tri right last"></span>
            </div>
        </aside>

        <section class="document">
            <div class="doc-top">
                <div class="vruler">
                    <button class="tab-stop" aria-label="左对齐制表符"></button>
                    <svg class="vruler-mark" viewBox="0 0 14 8"><path d="M0 0h14v5H0z" fill="#a0bff0"/><path d="M3 2h8M4 5h7M8 0v8M5 1v2" stroke="#000" stroke-width="1.500"/></svg>
                </div>
                <div class="canvas">
                    <div class="ruler">
                        <div class="ruler-scale">
                            <span class="margin-left"><i>4</i><i>2</i></span>
                            <span class="ruler-text"><i>2</i><i>4</i><i>6</i><i>8</i><i>10</i><i>12</i><i>14</i><i>16</i><i>18</i><i>20</i><i>22</i><i>24</i><i>26</i><i>28</i><i>30</i><i>32</i><i>34</i><i>36</i><i>38</i><i>40</i><i>42</i><i>44</i><i>46</i></span>
                            <span class="margin-right"><i>48</i><i>50</i></span>
                            <svg class="indent-left" viewBox="0 0 10 22"><path d="M1.500.5h7v3L5 8 1.500 3.500zM5 8l3.500 4v2.500h-7V12zM1.500 15.500h7v5h-7z" fill="#fff" stroke="#555"/></svg>
                            <svg class="indent-right" viewBox="0 0 10 9"><path d="M1.500 8.500V5L5 1l3.500 4v3.500z" fill="#fff" stroke="#555"/></svg>
                        </div>
                    </div>
                    <div class="pages">
                        <div class="page page-end"></div>
                        <article class="page">
                            <span class="crop crop-left"></span>
                            <span class="crop crop-right"></span>
                            <p class="page-header">ISO 21771:2007</p>
                            <h2>Gears—Cylidrical involute gears and gear pairs—Concepts and geometry</h2>
                            <h3>齿轮—渐开线圆柱齿轮与齿轮副—概念与几何</h3>
                            <h4>1 Scope</h4>
                            <h4 class="blue">1 范围</h4>
                            <p>This International Standard specifies the geometric concepts and parameters for cylindrical gears with involute helicoid tooth flanks. Flank modificaitons are included.</p>
                            <p class="cn">本国际标准规定了齿面为渐开线螺旋面的圆柱齿轮的几何概念与尺寸参数，包括齿面修形。</p>
                            <p>It also covers the concepts and parameters for cylindrical gear pairs with parallel axes and a constant gear ratio, which&nbsp;consist&nbsp;of cylindrical gears according to it. Gear and mating gear in these gear pairs have the same basic rack tooth&nbsp;profile.</p>
                            <p class="cn">本标准还论述了由圆柱齿轮组成的定比平行轴齿轮副的相关概念与尺寸参数。标准中给出的齿轮副中的齿轮及其配对齿轮的基本齿条齿廓是相同的。</p>
                            <p class="tall">The equations given are not restricted to the pressure angle, <span class="formula"><i>α</i><sub>p</sub> = 20°</span>.</p>
                            <p class="cn tall">本标准给出的计算公式不限于压力角<span class="formula"><i>α</i><sub>p</sub> = 20°</span>的特定情形。</p>
                            <p>The standard is structures as follows.</p>
                            <ul class="clauses">
                                <li>Listing of symbols and nomenclature for a unique description of gears and gear pairs (see Clause 3).</li>
                                <li>Equations and explanations of the relevant values for defining a cylindrical gear and its tooth system. The equations for determination of the nominal values for zero-deviation gear description parameters are stated for radial tooth dimensions (gear tooth heights), the distance between flanks of the same hand, the distance between flanks of opposite hand, as well as the tooth flanks characterizing parameters (see Clause 4).</li>
                            </ul>
                        </article>
                    </div>
                </div>
                <div class="vscroll doc-vscroll">
                    <span class="tri up"></span>
                    <span class="thumb"></span>
                    <span class="tri down last"></span>
                    <button class="browse" aria-label="前一页"><svg viewBox="0 0 10 10"><path d="M2 5h6L5 1zM2 9h6L5 5z" fill="#000"/></svg></button>
                    <button class="browse" aria-label="选择浏览对象"><svg viewBox="0 0 10 10"><circle cx="5" cy="5" r="3.500" fill="#aab" stroke="#222"/></svg></button>
                    <button class="browse" aria-label="下一页"><svg viewBox="0 0 10 10"><path d="M2 1h6L5 5zM2 5h6L5 9z" fill="#000"/></svg></button>
                </div>
            </div>
            <div class="hscroll doc-hscroll">
                <button class="view" aria-label="普通视图"><svg viewBox="0 0 10 10"><path d="M1 1.500h8M1 3.500h8M1 6.500h8M1 8.500h8" stroke="#000"/></svg></button>
                <button class="view" aria-label="Web 版式视图"><svg viewBox="0 0 10 10"><path d="M1.500 1.500h7v6h-7z" fill="#fff" stroke="#000"/><circle cx="7" cy="7" r="2.500" fill="#246"/></svg></button>
                <button class="view on" aria-label="页面视图"><svg viewBox="0 0 10 10"><path d="M1.500 1.500h7v7h-7z" fill="#fff" stroke="#000"/><path d="M3 4h4M3 6h4" stroke="#000"/></svg></button>
                <button class="view" aria-label="大纲视图"><svg viewBox="0 0 10 10"><path d="M1 1.500h6M4 3.500h5M4 5.500h5M2 8.500h7M1 4.500h1" stroke="#000"/></svg></button>
                <button class="view" aria-label="阅读版式"><svg viewBox="0 0 10 10"><path d="M1 1.500h3l1 1 1-1h3v6H6l-1 1-1-1H1zM5 2v6" fill="#fff" stroke="#000"/></svg></button>
                <span class="tri left"></span>
                <span class="thumb wide"></span>
                <span class="tri right"></span>
            </div>
        </section>
    </main>

    <div class="toolbar-row symbol-row">
        <div class="toolbar">
            <span class="grip"></span>
            <button class="tb sym">，</button>
            <button class="tb sym">。</button>
            <button class="tb sym">、</button>
            <button class="tb sym">;</button>
            <button class="tb sym">:</button>
            <button class="tb sym">?</button>
            <button class="tb sym">!</button>
            <button class="tb sym">…</button>
            <button class="tb sym">‘</button>
            <button class="tb sym">“</button>
            <button class="tb sym">(</button>
            <button class="tb sym">《</button>
            <button class="tb sym">{</button>
            <button class="tb sym">〖</button>
            <button class="tb sym">【</button>
            <button class="tb sym">#</button>
            <button class="tb sym">~</button>
            <button class="tb sym">·</button>
            <button class="tb sym">※</button>
            <button class="tb sym shape">○</button>
            <button class="tb sym">◎</button>
            <button class="tb sym shape">□</button>
            <button class="tb sym">+</button>
            <button class="tb sym">−</button>
            <button class="tb sym">×</button>
            <button class="tb sym">÷</button>
            <button class="tb sym shape">№</button>
            <button class="tb sym">$</button>
            <button class="tb sym">¥</button>
            <button class="tb sym">§</button>
            <button class="tb sym shape">‰</button>
            <button class="tb sym shape">—</button>
            <button class="tb sym unit">kg</button>
            <button class="tb sym unit">mm</button>
            <button class="tb sym unit">cm</button>
            <button class="tb sym unit">m²</button>
            <button class="more" aria-label="工具栏选项"></button>
        </div>
    </div>

    <footer class="statusbar">
        <div class="cell cell-page"><span>1 页</span><span>4 节</span><span>7/114</span></div>
        <div class="cell cell-pos off"><span>位置</span><span>行</span><span>列</span></div>
        <div class="cell off">录制</div>
        <div class="cell off">修订</div>
        <div class="cell off">扩展</div>
        <div class="cell off">改写</div>
        <div class="cell cell-lang">英语 (美国)</div>
        <div class="cell w44"></div>
        <div class="cell w36"></div>
        <div class="cell w28"></div>
        <div class="cell w28"></div>
    </footer>

    <div class="taskbar">
        <button class="start" aria-label="开始"><svg viewBox="0 0 36 36"><circle cx="18" cy="18" r="17" fill="#3a6ea0" stroke="#23405c" stroke-width="2"/><path d="M4 12a15 15 0 0 1 28 0z" fill="#9fc3dc"/><path d="M9 12c3-3 6-3 8-2v9H9z" fill="#e8602c"/><path d="M18 10c3 2 6 1 8-1v9h-8z" fill="#8cc04a"/></svg></button>
        <button class="task" aria-label="任务 1"></button>
        <button class="task active" aria-label="任务 2"></button>
        <span class="tray"><svg viewBox="0 0 60 8"><path d="M2 7l4-4M8 7l2-3" stroke="#bbb"/><circle cx="24" cy="8" r="5" fill="#446" stroke="#ccd"/><path d="M45.500 1.500h6v5h-6zM42.500 4.500h6v5h-6z" fill="#554" stroke="#fff"/></svg></span>
        <button class="desktop" aria-label="显示桌面"></button>
    </div>

    <script src="marks.js"></script>
</body>
</html>
```
FILE: styles.css
```css
* {
    box-sizing: border-box;
}

body {
    margin: 0;
    height: 100vh;
    display: flex;
    flex-direction: column;
    overflow: hidden;
    background: #c4d8f8;
    font-family: "Noto Sans", "Noto Sans CJK SC", sans-serif;
    font-size: 12px;
    color: #000;
}

button {
    margin: 0;
    padding: 0;
    border: 0;
    background: none;
    font: inherit;
    color: inherit;
}

a {
    color: inherit;
    text-decoration: none;
}

svg {
    display: block;
}

/* title bar */
.titlebar {
    height: 21px;
    flex: none;
    display: flex;
    align-items: center;
    background: radial-gradient(ellipse at 344px 18px, #c8a78c 0, transparent 14px),
        radial-gradient(ellipse at 844px 20px, #cfae92 0, transparent 18px),
        linear-gradient(90deg, #aab2bc 0, #a2aab6 300px, #68788f 350px, #5f6f8c 420px, #76869e 600px, #5f6f8a 1000px, #70819b 1250px, #60718b 100%);
}

.titlebar h1 {
    margin: 0 0 0 5px;
    font-size: 12px;
    font-weight: normal;
    line-height: 21px;
    flex: 1;
}

.app-icon {
    width: 16px;
    height: 16px;
}

.window-buttons {
    display: flex;
    align-self: flex-start;
    height: 18px;
    margin-right: 2px;
    border: 1px solid #36404f;
    border-top: 0;
    border-radius: 0 0 5px 5px;
    overflow: hidden;
}

.window-buttons button {
    width: 28px;
    display: flex;
    align-items: center;
    justify-content: center;
    background: linear-gradient(#c2c9d2 0, #a4aebb 45%, #6d7a8c 50%, #95a2b2 100%);
    border-right: 1px solid #36404f;
}

.window-buttons svg {
    width: 16px;
    height: 12px;
}

.window-buttons .win-close {
    width: 47px;
    border-right: 0;
    background: linear-gradient(#e0a294 0, #cc6a56 45%, #b0301a 50%, #d8664a 100%);
}

/* menu bar */
.menubar {
    height: 29px;
    flex: none;
    display: flex;
    align-items: center;
    padding-left: 3px;
    border-top: 1px solid #3c485c;
    background: linear-gradient(90deg, #9ebdf2 0, #c4d8f8 60%);
}

.menubar a {
    padding: 0 8px;
    line-height: 20px;
}

.grip {
    width: 6px;
    height: 16px;
    flex: none;
    background: repeating-linear-gradient(#2b4a86 0, #2b4a86 2px, transparent 2px, transparent 4px) 3px 0 / 2px 100% no-repeat;
}

.doc-close {
    width: 20px;
    height: 20px;
    display: flex;
    align-items: center;
    justify-content: center;
}

.doc-close svg {
    width: 8px;
    height: 8px;
}

/* toolbars */
.toolbar-row {
    height: 28px;
    flex: none;
    display: flex;
    gap: 3px;
    padding: 1px 0 1px 3px;
    background: linear-gradient(90deg, #9ebdf2 0, #c4d8f8 60%);
}

.toolbar-row.tight {
    height: 27px;
    padding: 0 0 1px 3px;
}

.toolbar {
    flex: none;
    display: flex;
    align-items: center;
    height: 26px;
    background: linear-gradient(#dfecff 0, #c9defb 45%, #a5c3f0 80%, #82a8e4 100%);
    border-bottom: 1px solid #3b619c;
    border-radius: 3px 4px 4px 3px;
}

.math-bar {
    margin-left: 24px;
}

.tb {
    width: 23px;
    height: 22px;
    flex: none;
    display: flex;
    align-items: center;
    justify-content: center;
}

.tb svg {
    width: 16px;
    height: 16px;
    overflow: visible;
}

.tb.on,
.view.on {
    background: linear-gradient(#ffb678, #ffc98a);
    border: 1px solid #000080;
}

.drop {
    width: 11px;
    height: 22px;
    flex: none;
    display: flex;
    align-items: center;
    justify-content: center;
}

.drop::before,
.combo-arrow::before {
    content: "";
    border: 3px solid transparent;
    border-top-color: #000;
    border-bottom: 0;
}

.drop.off::before {
    border-top-color: #8b9dc3;
}

.sep {
    width: 6px;
    height: 18px;
    flex: none;
    background: linear-gradient(90deg, #6a8ccb 1px, #f1f9ff 1px) 2px 0 / 2px 100% no-repeat;
}

.more {
    width: 11px;
    height: 26px;
    margin-left: 3px;
    flex: none;
    display: flex;
    flex-direction: column;
    align-items: center;
    justify-content: flex-end;
    padding-bottom: 4px;
    background: linear-gradient(#7ba4e8 0, #3f6fc4 50%, #0a2f8c 100%);
    border-radius: 0 4px 4px 0;
}

.more::before {
    content: "";
    width: 6px;
    height: 1px;
    margin-bottom: 2px;
    background: #fff;
}

.more::after {
    content: "";
    border: 3px solid transparent;
    border-top-color: #fff;
    border-bottom: 0;
}

.glyph-cn {
    font-size: 16px;
    line-height: 20px;
}

.mono {
    font-size: 11px;
}

.sigma,
.sig {
    font-family: "Liberation Serif", serif;
    color: #0000d0;
    fill: #0000d0;
}

.sigma {
    font-size: 14px;
    line-height: 14px;
}

.sigma.big {
    font-size: 18px;
    font-weight: bold;
}

.sigma.dim {
    font-size: 16px;
    color: #4a5f95;
}

.sigma small {
    font-size: 9px;
    color: #000;
}

.sigma.lined {
    height: 16px;
    background: linear-gradient(#000, #000) center top / 16px 1px no-repeat,
        linear-gradient(#000, #000) center bottom / 16px 1px no-repeat;
}

.serif {
    font-family: "Liberation Serif", serif;
}

.letter {
    font-family: "Liberation Serif", serif;
    font-size: 15px;
    font-weight: bold;
}

.letter sup,
.letter sub {
    font-size: 8px;
    line-height: 16px;
    color: #26a;
}

.letter sup {
    align-self: flex-start;
}

.letter sub {
    align-self: flex-end;
}

.letter span {
    width: 16px;
    line-height: 16px;
}

.boxed span {
    border: 1px solid #26518f;
    line-height: 14px;
}

.boxed,
.shaded {
    color: #333;
}

.shaded span {
    background: #b0b4bc;
}

.read {
    display: flex;
    align-items: center;
    gap: 3px;
    width: 66px;
    padding-left: 5px;
    white-space: nowrap;
}

.read svg {
    width: 14px;
    height: 16px;
}

.combo {
    position: relative;
    flex: none;
    height: 22px;
    margin: 0 1px;
    background: #fff;
}

.combo select,
.combo input {
    appearance: none;
    width: 100%;
    height: 22px;
    margin: 0;
    padding: 0 14px 2px 3px;
    border: 0;
    background: transparent;
    font-family: inherit;
    font-size: 12px;
    color: #000;
    overflow: hidden;
}

.combo input::placeholder {
    color: #808080;
    opacity: 1;
}

.combo-arrow {
    position: absolute;
    top: 1px;
    right: 1px;
    bottom: 1px;
    width: 13px;
    display: flex;
    align-items: center;
    justify-content: center;
    background: #c9dcf8;
    pointer-events: none;
}

.menubar .help-box {
    width: 178px;
    margin-left: auto;
}

.zoom-box {
    width: 59px;
}

.equations-box {
    width: 162px;
}

.style-box {
    width: 82px;
}

.font-box {
    width: 124px;
}

.size-box {
    width: 52px;
}

.line-box {
    width: 132px;
}

.weight-box {
    width: 70px;
}

.weight-box select {
    padding-left: 18px;
}

.line-sample {
    position: absolute;
    left: 13px;
    right: 26px;
    top: 11px;
    height: 1px;
    background: #000;
}

/* document map */
.workspace {
    flex: 1;
    min-height: 0;
    display: flex;
    border-top: 2px solid #6f7b8e;
    border-left: 2px solid #7f8794;
    background: #f0f0f0;
}

.outline {
    width: 358px;
    flex: none;
    display: flex;
    flex-direction: column;
    border-right: 1px solid #fff;
    background: #f0f0f0;
}

.outline-top {
    flex: 1;
    min-height: 0;
    display: flex;
}

.tree {
    flex: 1;
    min-width: 0;
    margin: 0;
    padding: 4px 0 0;
    list-style: none;
    overflow: hidden;
    white-space: nowrap;
    background: #ddebfd;
    font-family: "Liberation Serif", serif;
    font-size: 14px;
    line-height: 16px;
}

.tree li {
    position: relative;
    padding-left: 24px;
}

.tree .l2 {
    padding-left: 36px;
}

.tree .l3 {
    padding-left: 48px;
}

.tree .l4 {
    padding-left: 60px;
}

.tree a {
    display: inline-block;
}

.tree .current {
    background: #000080;
    color: #fff;
}

.tree .open a::before {
    content: "";
    position: absolute;
    top: 3px;
    width: 9px;
    height: 9px;
    margin-left: -11px;
    border: 1px solid #000;
    background: linear-gradient(#000, #000) center / 5px 1px no-repeat;
}

.vscroll {
    width: 17px;
    flex: none;
    display: flex;
    flex-direction: column;
    align-items: center;
    padding: 7px 0;
    background: #f0f0f0;
}

.hscroll {
    height: 18px;
    flex: none;
    display: flex;
    align-items: center;
    padding: 0 22px 0 6px;
    background: #f0f0f0;
}

.tri {
    border: 3px solid transparent;
    flex: none;
}

.tri.up {
    border-top: 0;
    border-bottom-color: #444;
}

.tri.down {
    border-bottom: 0;
    border-top-color: #444;
}

.tri.left {
    border-left: 0;
    border-right-color: #444;
}

.tri.right {
    border-right: 0;
    border-left-color: #444;
}

.thumb {
    width: 15px;
    height: 15px;
    flex: none;
    border: 1px solid #979797;
    border-radius: 1px;
    background: linear-gradient(135deg, #f5f5f5, #d2d2d6);
}

.vscroll .thumb {
    margin-top: 7px;
}

.hscroll .thumb {
    margin-left: 9px;
}

.vscroll .last {
    margin-top: auto;
}

.hscroll .last {
    margin-left: auto;
}

/* document */
.document {
    flex: 1;
    min-width: 0;
    display: flex;
    flex-direction: column;
    margin-left: 7px;
    border-left: 2px solid #6f7b8e;
}

.doc-top {
    flex: 1;
    min-height: 0;
    display: flex;
}

.vruler {
    width: 23px;
    flex: none;
    padding: 3px 0 0 3px;
    background: #d8e7fc;
}

.tab-stop {
    display: block;
    width: 15px;
    height: 15px;
    border: 1px solid #4a72b8;
    background: linear-gradient(#555, #555) 4px 4px / 2px 6px no-repeat,
        linear-gradient(#555, #555) 4px 9px / 6px 2px no-repeat, #e6effc;
}

.vruler-mark {
    width: 14px;
    height: 8px;
    margin-top: 4px;
}

.canvas {
    flex: 1;
    min-width: 0;
    display: flex;
    flex-direction: column;
    background: #9199ae;
}

.ruler {
    height: 22px;
    flex: none;
    display: flex;
    justify-content: center;
    padding-top: 4px;
    background: #d8e7fc;
}

.ruler-scale {
    position: relative;
    display: flex;
    width: 793px;
    height: 12px;
    font-family: "Liberation Sans", sans-serif;
    font-size: 10px;
    line-height: 13px;
}

/* default tab stops under the scale */
.ruler-scale::after {
    content: "";
    position: absolute;
    left: 66px;
    right: 66px;
    top: 14px;
    height: 3px;
    background: repeating-linear-gradient(90deg, transparent 0, transparent 37px, #667 37px, #667 38px);
}

.ruler i {
    width: 28px;
    flex: none;
    font-style: normal;
    text-align: center;
}

.margin-left,
.margin-right {
    display: flex;
    background: #a0bff4;
}

.margin-left {
    width: 64px;
    margin-right: 1px;
}

.margin-left i:first-child {
    width: 18px;
}

.margin-left i:last-child {
    width: 38px;
}

.ruler-text {
    display: flex;
    flex: 1;
    min-width: 0;
    padding-left: 14px;
    background: #fff;
}

.margin-right {
    width: 65px;
}

.margin-right i:first-child {
    width: 19px;
}

.margin-right i:last-child {
    width: 37px;
}

.indent-left,
.indent-right {
    position: absolute;
    z-index: 1;
    width: 10px;
}

.indent-left {
    left: 59px;
    top: -3px;
    height: 22px;
}

.indent-right {
    right: 61px;
    top: 4px;
    height: 9px;
}

.pages {
    flex: 1;
    min-height: 0;
    overflow: hidden;
}

.page {
    position: relative;
    width: 796px;
    margin: 0 auto;
    padding: 32px 66px 0;
    border: 1px solid #000;
    background: #fff;
    box-shadow: 2px 2px 0 #000;
    font-family: "Liberation Serif", "Noto Sans CJK SC", serif;
    font-size: 14px;
    line-height: 24px;
}

.page-end {
    height: 6px;
    margin-bottom: 14px;
    padding: 0;
    border-top: 0;
}

.page p,
.page h2,
.page h3,
.page h4 {
    margin: 0;
}

.page p,
.clauses {
    text-align: justify;
}

.page .page-header {
    margin-bottom: 17px;
    text-align: right;
    font-size: 12px;
    color: #808080;
}

.page h2 {
    position: relative;
    font-size: 20px;
    line-height: 48px;
    text-align: center;
    white-space: nowrap;
}

.page h2::before {
    content: "";
    position: absolute;
    left: -8px;
    top: 20px;
    width: 4px;
    height: 4px;
    background: #000;
}

.page h3 {
    height: 32px;
    font-size: 14px;
    line-height: 30px;
    text-align: center;
    color: #00f;
}

.page h4 {
    height: 26px;
    font-size: 16px;
    line-height: 26px;
}

.page .blue {
    height: 27px;
    color: #00f;
}

.page .cn {
    color: #d010d0;
}

.page .tall {
    height: 48px;
    line-height: 48px;
}

.formula {
    margin: 0 2px;
    font-size: 16px;
    line-height: 0;
    color: #000;
}

.formula i {
    font-size: 18px;
}

.formula sub {
    font-size: 11px;
    line-height: 0;
}

.page p::after,
.page h2::after,
.page h3::after,
.page h4::after,
.clauses li::after {
    content: "↵";
    font-family: "DejaVu Sans", sans-serif;
    font-size: 10px;
    font-weight: normal;
    line-height: 0;
    color: #707070;
}

.page .page-header::after,
.page h2::after,
.page h3::after {
    margin-right: -8px;
}

/* non-printing dot shown in every blank */
.blank {
    background: linear-gradient(#777, #777) 50% 60% / 1px 1px no-repeat;
}

h2 .blank {
    background-size: 2px 2px;
}

.clauses {
    margin: 0;
    padding: 0;
    list-style: none;
}

.clauses li {
    position: relative;
    padding-left: 24px;
}

.clauses li::before {
    content: "→";
    position: absolute;
    left: 0;
    width: 24px;
    font-family: "DejaVu Sans", sans-serif;
    font-size: 10px;
    text-align: right;
    text-align-last: right;
    color: #777;
    background: linear-gradient(#000, #000) 1px 11px / 12px 1px no-repeat;
}

.crop {
    position: absolute;
    top: 41px;
    width: 24px;
    height: 24px;
    border-bottom: 1px solid #999;
}

.crop-left {
    left: 42px;
    border-right: 1px solid #999;
}

.crop-right {
    right: 42px;
    border-left: 1px solid #999;
}

.doc-vscroll {
    width: 19px;
    padding-bottom: 1px;
}

.doc-vscroll .thumb {
    margin-top: 26px;
}

.doc-vscroll .down {
    margin-bottom: 6px;
}

.browse {
    width: 17px;
    height: 17px;
    display: flex;
    align-items: center;
    justify-content: center;
}

.browse svg {
    width: 9px;
    height: 9px;
}

.doc-hscroll {
    padding: 0 23px 0 0;
}

.view {
    width: 17px;
    height: 17px;
    flex: none;
    display: flex;
    align-items: center;
    justify-content: center;
}

.view svg {
    width: 10px;
    height: 10px;
}

.doc-hscroll .left {
    margin-left: 6px;
}

.hscroll .wide {
    flex: 1;
    margin-right: 10px;
    background: repeating-linear-gradient(90deg, #777 0, #777 1px, transparent 1px, transparent 3px) center / 8px 7px no-repeat,
        linear-gradient(#f4f4f4, #c9c9cd);
}

/* bottom bars */
.symbol-row {
    border-top: 1px solid #fff;
}

.sym {
    font-family: "Liberation Mono", "Noto Sans CJK SC", monospace;
}

.sym.shape {
    font-family: "Noto Sans CJK SC", sans-serif;
}

.sym.unit {
    font-size: 10px;
}

.statusbar {
    height: 20px;
    flex: none;
    display: flex;
    gap: 6px;
    padding: 2px 5px 1px;
    border-top: 1px solid #fff;
    background: #f0f0ee;
    font-family: "Noto Sans CJK SC", sans-serif;
}

.cell {
    height: 17px;
    flex: none;
    padding: 0 2px;
    border: 1px solid #d0d0d0;
    line-height: 14px;
    white-space: nowrap;
}

.cell.off {
    color: #a0a0a0;
}

.cell-page {
    width: 196px;
    display: flex;
    gap: 36px;
    padding-left: 43px;
}

.cell-pos {
    width: 226px;
    display: flex;
    gap: 32px;
}

.cell-pos span:first-child {
    flex: 1;
}

.cell-lang {
    width: 66px;
}

.w44 {
    width: 44px;
}

.w36 {
    width: 36px;
}

.w28 {
    width: 28px;
}

.taskbar {
    position: relative;
    height: 8px;
    flex: none;
    display: flex;
    gap: 4px;
    padding-left: 60px;
    overflow: hidden;
    border-top: 1px solid #2c2a14;
    background: linear-gradient(90deg, #55502a 0, #7d7448 30%, #5d5a2c 45%, #8a8054 60%, #5d5a2c 75%, #857b4e 100%);
}

.start {
    position: absolute;
    left: 9px;
    top: -5px;
}

.start svg {
    width: 36px;
    height: 36px;
}

.task {
    width: 158px;
    background: linear-gradient(90deg, #a9a47e, #c8bda0);
    border: 1px solid #e0dcc0;
    border-bottom: 0;
}

.task.active {
    background: linear-gradient(90deg, #e6e4d4, #c6c29c);
}

.tray {
    margin-left: auto;
    margin-right: 220px;
    width: 60px;
}

.tray svg {
    width: 60px;
    height: 8px;
}

.desktop {
    width: 15px;
    background: #8c8a6c;
    border: 1px solid #c8c6b0;
    border-bottom: 0;
}
```
FILE: marks.js
```js
// show a dot in every blank of the page text
document.addEventListener("DOMContentLoaded", () => {
    document.querySelectorAll(".page p, .page h2, .page h4, .clauses li").forEach((block) => {
        Array.from(block.childNodes).forEach((node) => {
            if (node.nodeType !== Node.TEXT_NODE) {
                return;
            }
            // keep the separators, a no-break space gets its dot too
            const parts = node.textContent.split(/([ \u00a0])/);
            const out = document.createDocumentFragment();
            parts.forEach((part) => {
                if (part === " " || part === "\u00a0") {
                    const blank = document.createElement("span");
                    blank.className = "blank";
                    blank.textContent = part;
                    out.append(blank);
                } else {
                    out.append(part);
                }
            });
            node.replaceWith(out);
        });
    });
});
```
